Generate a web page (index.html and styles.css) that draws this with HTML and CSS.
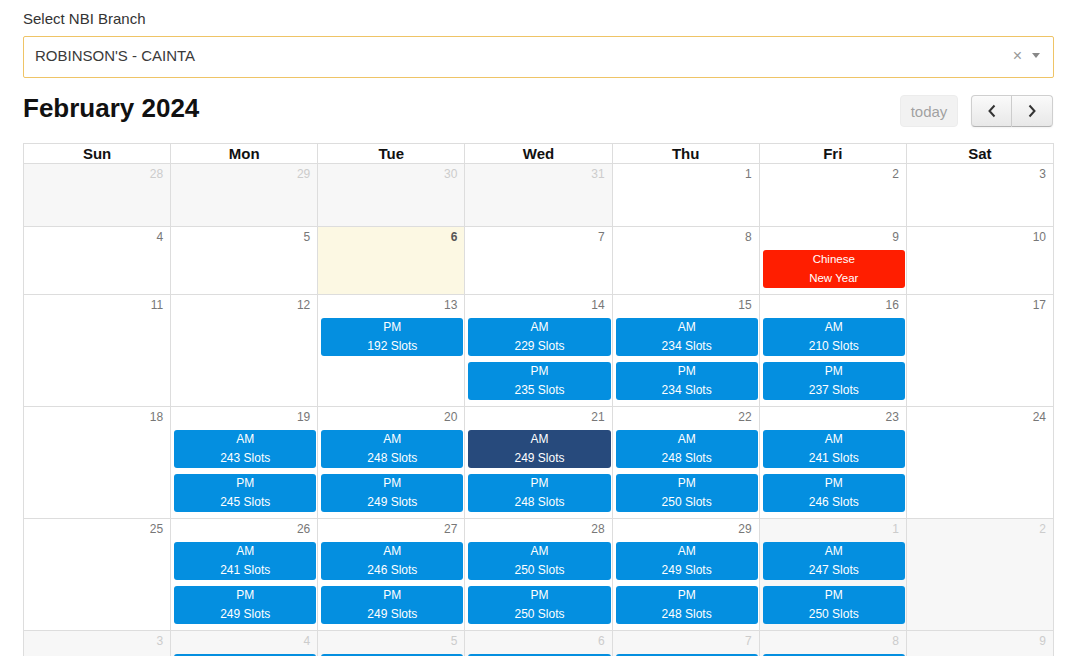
FILE: index.html
```html
<!DOCTYPE html>
<html lang="en">
<head>
<meta charset="utf-8">
<title>NBI Appointment Calendar</title>
<link rel="stylesheet" href="styles.css">
</head>
<body>
<div class="page">
  <label class="field-label">Select NBI Branch</label>
  <div class="select">
    <span class="select-value">ROBINSON'S - CAINTA</span>
    <span class="select-clear">×</span>
    <span class="select-caret"></span>
  </div>

  <div class="toolbar">
    <h2 class="title">February 2024</h2>
    <div class="toolbar-right">
      <button class="btn btn-today" disabled>today</button>
      <div class="btn-group">
        <button class="btn btn-nav" aria-label="prev">
          <svg width="10" height="14" viewBox="0 0 10 14"><path d="M7.5 1.5 2.5 7l5 5.5" fill="none" stroke="#333" stroke-width="2"/></svg>
        </button>
        <button class="btn btn-nav" aria-label="next">
          <svg width="10" height="14" viewBox="0 0 10 14"><path d="M2.5 1.5 7.5 7l-5 5.5" fill="none" stroke="#333" stroke-width="2"/></svg>
        </button>
      </div>
    </div>
  </div>

  <div class="calendar">
    <div class="week head">
      <div class="hd">Sun</div><div class="hd">Mon</div><div class="hd">Tue</div><div class="hd">Wed</div><div class="hd">Thu</div><div class="hd">Fri</div><div class="hd">Sat</div>
    </div>

    <div class="week">
      <div class="day other"><div class="num">28</div></div>
      <div class="day other"><div class="num">29</div></div>
      <div class="day other"><div class="num">30</div></div>
      <div class="day other"><div class="num">31</div></div>
      <div class="day"><div class="num">1</div></div>
      <div class="day"><div class="num">2</div></div>
      <div class="day"><div class="num">3</div></div>
    </div>

    <div class="week">
      <div class="day"><div class="num">4</div></div>
      <div class="day"><div class="num">5</div></div>
      <div class="day today"><div class="num">6</div></div>
      <div class="day"><div class="num">7</div></div>
      <div class="day"><div class="num">8</div></div>
      <div class="day"><div class="num">9</div>
        <div class="ev holiday"><span>Chinese</span><span>New Year</span></div>
      </div>
      <div class="day"><div class="num">10</div></div>
    </div>

    <div class="week">
      <div class="day"><div class="num">11</div></div>
      <div class="day"><div class="num">12</div></div>
      <div class="day"><div class="num">13</div>
        <div class="ev"><span>PM</span><span>192 Slots</span></div>
      </div>
      <div class="day"><div class="num">14</div>
        <div class="ev"><span>AM</span><span>229 Slots</span></div>
        <div class="ev"><span>PM</span><span>235 Slots</span></div>
      </div>
      <div class="day"><div class="num">15</div>
        <div class="ev"><span>AM</span><span>234 Slots</span></div>
        <div class="ev"><span>PM</span><span>234 Slots</span></div>
      </div>
      <div class="day"><div class="num">16</div>
        <div class="ev"><span>AM</span><span>210 Slots</span></div>
        <div class="ev"><span>PM</span><span>237 Slots</span></div>
      </div>
      <div class="day"><div class="num">17</div></div>
    </div>

    <div class="week">
      <div class="day"><div class="num">18</div></div>
      <div class="day"><div class="num">19</div>
        <div class="ev"><span>AM</span><span>243 Slots</span></div>
        <div class="ev"><span>PM</span><span>245 Slots</span></div>
      </div>
      <div class="day"><div class="num">20</div>
        <div class="ev"><span>AM</span><span>248 Slots</span></div>
        <div class="ev"><span>PM</span><span>249 Slots</span></div>
      </div>
      <div class="day"><div class="num">21</div>
        <div class="ev selected"><span>AM</span><span>249 Slots</span></div>
        <div class="ev"><span>PM</span><span>248 Slots</span></div>
      </div>
      <div class="day"><div class="num">22</div>
        <div class="ev"><span>AM</span><span>248 Slots</span></div>
        <div class="ev"><span>PM</span><span>250 Slots</span></div>
      </div>
      <div class="day"><div class="num">23</div>
        <div class="ev"><span>AM</span><span>241 Slots</span></div>
        <div class="ev"><span>PM</span><span>246 Slots</span></div>
      </div>
      <div class="day"><div class="num">24</div></div>
    </div>

    <div class="week">
      <div class="day"><div class="num">25</div></div>
      <div class="day"><div class="num">26</div>
        <div class="ev"><span>AM</span><span>241 Slots</span></div>
        <div class="ev"><span>PM</span><span>249 Slots</span></div>
      </div>
      <div class="day"><div class="num">27</div>
        <div class="ev"><span>AM</span><span>246 Slots</span></div>
        <div class="ev"><span>PM</span><span>249 Slots</span></div>
      </div>
      <div class="day"><div class="num">28</div>
        <div class="ev"><span>AM</span><span>250 Slots</span></div>
        <div class="ev"><span>PM</span><span>250 Slots</span></div>
      </div>
      <div class="day"><div class="num">29</div>
        <div class="ev"><span>AM</span><span>249 Slots</span></div>
        <div class="ev"><span>PM</span><span>248 Slots</span></div>
      </div>
      <div class="day other"><div class="num">1</div>
        <div class="ev"><span>AM</span><span>247 Slots</span></div>
        <div class="ev"><span>PM</span><span>250 Slots</span></div>
      </div>
      <div class="day other"><div class="num">2</div></div>
    </div>

    <div class="week">
      <div class="day other"><div class="num">3</div></div>
      <div class="day other"><div class="num">4</div><div class="ev"></div></div>
      <div class="day other"><div class="num">5</div><div class="ev"></div></div>
      <div class="day other"><div class="num">6</div><div class="ev"></div></div>
      <div class="day other"><div class="num">7</div><div class="ev"></div></div>
      <div class="day other"><div class="num">8</div><div class="ev"></div></div>
      <div class="day other"><div class="num">9</div></div>
    </div>
  </div>
</div>
</body>
</html>
```

FILE: styles.css
```css
* { box-sizing: border-box; }

html, body {
  margin: 0;
  padding: 0;
  background: #fff;
  font-family: "Liberation Sans", Arial, sans-serif;
  color: #333;
}

.page {
  width: 1031px;
  margin-left: 23px;
  padding-top: 9px;
}

/* branch picker */
.field-label {
  display: block;
  font-size: 15px;
  line-height: 20px;
  color: #333;
  margin-bottom: 7px;
}

.select {
  height: 42px;
  border: 1px solid #efc466;
  border-radius: 2px;
  display: flex;
  align-items: center;
  padding: 0 12px 3px 11px;
  background: #fff;
}

.select-value {
  flex: 1;
  font-size: 15px;
  color: #3a3a3a;
}

.select-clear {
  font-size: 16px;
  color: #999;
  margin-right: 10px;
  line-height: 1;
}

.select-caret {
  width: 0;
  height: 0;
  border-left: 4px solid transparent;
  border-right: 4px solid transparent;
  border-top: 5px solid #888;
  margin-right: 1px;
}

/* header toolbar */
.toolbar {
  display: flex;
  align-items: flex-start;
  justify-content: space-between;
  margin: 17px 0 16px;
  height: 32px;
}

.title {
  margin: 0;
  font-size: 26px;
  line-height: 26px;
  font-weight: bold;
  color: #111;
}

.toolbar-right {
  display: flex;
  align-items: center;
  gap: 13px;
}

.btn {
  font-family: inherit;
  font-size: 15px;
  height: 32px;
  border: 1px solid #cfcfcf;
  border-bottom-color: #b3b3b3;
  border-radius: 4px;
  background: linear-gradient(#fafafa, #e8e8e8);
  color: #333;
  padding: 0;
  box-shadow: inset 0 1px 0 rgba(255,255,255,.3), 0 1px 2px rgba(0,0,0,.05);
}

.btn-today {
  width: 58px;
  opacity: .55;
  background: #e9e9e9;
  color: #555;
  box-shadow: none;
  border-color: #ddd;
}

.btn-group {
  display: flex;
  margin-right: 1px;
}

.btn-nav {
  width: 41px;
  display: flex;
  align-items: center;
  justify-content: center;
}

.btn-nav:first-child {
  border-top-right-radius: 0;
  border-bottom-right-radius: 0;
}

.btn-nav:last-child {
  border-top-left-radius: 0;
  border-bottom-left-radius: 0;
  border-left: 0;
}

/* month grid */
.calendar {
  border-left: 1px solid #ddd;
  border-top: 1px solid #ddd;
}

.week {
  display: grid;
  grid-template-columns: repeat(7, 1fr);
}

.hd {
  height: 20px;
  line-height: 19px;
  text-align: center;
  font-weight: bold;
  font-size: 15px;
  color: #111;
  border-right: 1px solid #ddd;
  border-bottom: 1px solid #ddd;
}

.day {
  border-right: 1px solid #ddd;
  border-bottom: 1px solid #ddd;
  padding-bottom: 6px;
  display: flex;
  flex-direction: column;
  gap: 6px;
  min-height: 63px;
}

.num {
  height: 23px;
  margin-bottom: -6px;
  padding: 1px 7px 0 0;
  text-align: right;
  font-size: 12px;
  line-height: 18px;
  color: #777;
}

.other {
  background: #f7f7f7;
}

.other .num {
  color: #ccc;
}

.today {
  background: #fcf8e3;
}

.today .num {
  font-weight: bold;
  color: #555;
}

.ev {
  margin: 0 1px 0 3px;
  height: 38px;
  border-radius: 3px;
  background: #048fe0;
  color: #fff;
  font-size: 12px;
  line-height: 19px;
  text-align: center;
  display: flex;
  flex-direction: column;
}

.ev.selected {
  background: #274a7c;
}

.ev.holiday {
  background: #ff1e00;
  font-size: 11.5px;
}
```
